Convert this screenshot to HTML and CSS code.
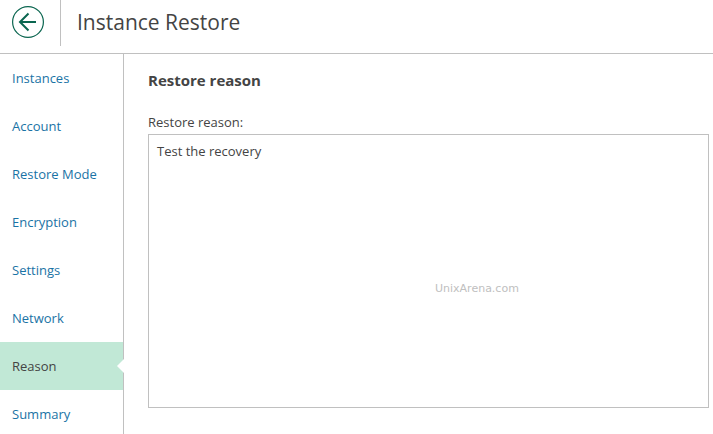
FILE: index.html
```html
<!DOCTYPE html>
<html lang="en">
<head>
    <meta charset="UTF-8">
    <meta name="viewport" content="width=device-width, initial-scale=1.0">
    <title>Instance Restore</title>
    <link rel="stylesheet" href="styles.css">
</head>
<body>
    <header class="header">
        <button class="back-btn" type="button" aria-label="Back">
            <svg width="32" height="32" viewBox="0 0 32 32" fill="none" stroke="#0b6650">
                <circle cx="16" cy="16" r="15.4" stroke-width="1.2"/>
                <path d="M24 16H8.5M16.5 7.5L8 16L16.5 24.5" stroke-width="2"/>
            </svg>
        </button>
        <h1 class="title">Instance Restore</h1>
    </header>

    <div class="wizard">
        <nav class="steps">
            <a class="step" href="#instances">Instances</a>
            <a class="step" href="#account">Account</a>
            <a class="step" href="#mode">Restore Mode</a>
            <a class="step" href="#encryption">Encryption</a>
            <a class="step" href="#settings">Settings</a>
            <a class="step" href="#network">Network</a>
            <a class="step active" href="#reason" aria-current="step">Reason</a>
            <a class="step" href="#summary">Summary</a>
        </nav>

        <main class="content">
            <h2 class="heading">Restore reason</h2>
            <label class="label" for="reason-text">Restore reason:</label>
            <div class="field">
                <textarea id="reason-text" class="reason-text">Test the recovery</textarea>
                <span class="watermark">UnixArena.com</span>
            </div>
        </main>
    </div>
</body>
</html>
```

FILE: styles.css
```css
* {
    box-sizing: border-box;
}

body {
    display: flex;
    flex-direction: column;
    min-height: 100vh;
    margin: 0;
    background-color: #ffffff;
    color: #444444;
    font-family: "Open Sans", sans-serif;
    font-size: 13px;
    line-height: 18px;
}

.header {
    display: flex;
    align-items: flex-start;
    border-bottom: 1px solid #c0c0c0;
    padding-bottom: 7px;
}

.back-btn {
    margin: 6px 16px 0 12px;
    padding: 0;
    border: none;
    background: none;
    line-height: 0;
    cursor: pointer;
}

.title {
    margin: 0;
    padding: 0 16px 2px;
    border-left: 1px solid #c0c0c0;
    font-size: 21px;
    font-weight: normal;
    line-height: 44px;
}

.wizard {
    display: flex;
    flex: 1;
}

.steps {
    flex: none;
    width: 124px;
    border-right: 1px solid #c0c0c0;
}

.step {
    display: block;
    padding: 15px 12px;
    color: #1a73a5;
    text-decoration: none;
}

.step.active {
    position: relative;
    background-color: #c1e8d6;
    color: #444444;
}

/* notch pointing into the selected step */
.step.active::after {
    content: "";
    position: absolute;
    top: 17px;
    right: -1px;
    width: 7px;
    height: 14px;
    background-color: #ffffff;
    clip-path: polygon(100% 0, 0 50%, 100% 100%);
}

.content {
    display: flex;
    flex: 1;
    flex-direction: column;
    padding: 16px 4px 30px 24px;
}

.heading {
    margin: 0 0 23px;
    font-size: 15px;
    font-weight: bold;
    line-height: 20px;
}

.label {
    margin-bottom: 3px;
}

.field {
    position: relative;
    display: flex;
    flex: 1;
}

.reason-text {
    flex: 1;
    padding: 7px 8px;
    border: 1px solid #c0c0c0;
    border-radius: 0;
    outline: none;
    resize: none;
    background-color: #ffffff;
    color: #444444;
    font: inherit;
}

.watermark {
    position: absolute;
    top: 146px;
    left: 287px;
    color: #c0c0c0;
    font-family: "DejaVu Sans", sans-serif;
    font-size: 11px;
    pointer-events: none;
}
```
